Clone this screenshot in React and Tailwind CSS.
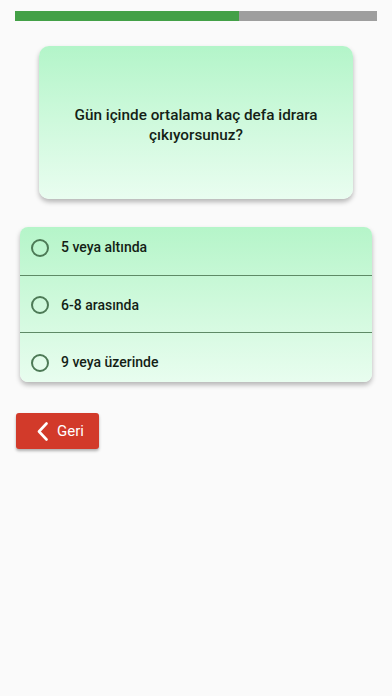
import React from 'react'

const options = [
  { label: '5 veya altında', row: 'h-[49px] pb-[7px] border-b border-[#5e8a66]' },
  { label: '6-8 arasında', row: 'h-[57px] pt-[2px] border-b border-[#5e8a66]' },
  { label: '9 veya üzerinde', row: 'h-[49px] pt-[10px]' },
]

const App = () => {
  return (
    <div className="min-h-[696px] w-full bg-[#fafafa] font-['Roboto',sans-serif]">
      {/* progress */}
      <div className="px-[15px] pt-[11px]">
        <div className="flex h-[10px] w-full bg-[#9e9e9e]">
          <div className="h-full w-[62%] bg-[#43a047]"></div>
        </div>
      </div>

      {/* question */}
      <div className="flex justify-center pt-[25px]">
        <div className="flex h-[153px] w-[314px] items-center justify-center rounded-[10px] bg-gradient-to-b from-[#b3f5c9] to-[#e9fdf0] px-6 pt-[4px] shadow-[0_3px_5px_rgba(0,0,0,0.28)]">
          <p className="text-center text-[15.3px] font-medium leading-[20px] text-[#141f16]">
            Gün içinde ortalama kaç defa idrara çıkıyorsunuz?
          </p>
        </div>
      </div>

      {/* answers */}
      <div className="px-[20px] pt-[28px]">
        <div className="overflow-hidden rounded-[8px] bg-gradient-to-b from-[#b5f5c9] to-[#e8fdef] shadow-[0_3px_5px_rgba(0,0,0,0.28)]">
          {options.map((o) => (
            <div key={o.label} className={'box-border flex items-center gap-[12px] pl-[11px] ' + o.row}>
              <span className="h-[18px] w-[18px] rounded-full border-2 border-[#4d7a56]"></span>
              <span className="text-[14px] font-medium text-[#141f16]">{o.label}</span>
            </div>
          ))}
        </div>
      </div>

      {/* back */}
      <div className="px-[16px] pt-[31px]">
        <button className="flex h-[36px] w-[83px] items-center gap-[9px] rounded-[3px] bg-[#d23a2a] pl-[21px] text-[15px] text-white shadow-[0_2px_3px_rgba(0,0,0,0.3)]">
          <svg width="11" height="19" viewBox="0 0 11 19" fill="none">
            <path d="M9.5 1.5 L2 9.5 L9.5 17.5" stroke="white" strokeWidth="2.6" strokeLinecap="round" strokeLinejoin="round" />
          </svg>
          <span>Geri</span>
        </button>
      </div>
    </div>
  )
}

export default App
